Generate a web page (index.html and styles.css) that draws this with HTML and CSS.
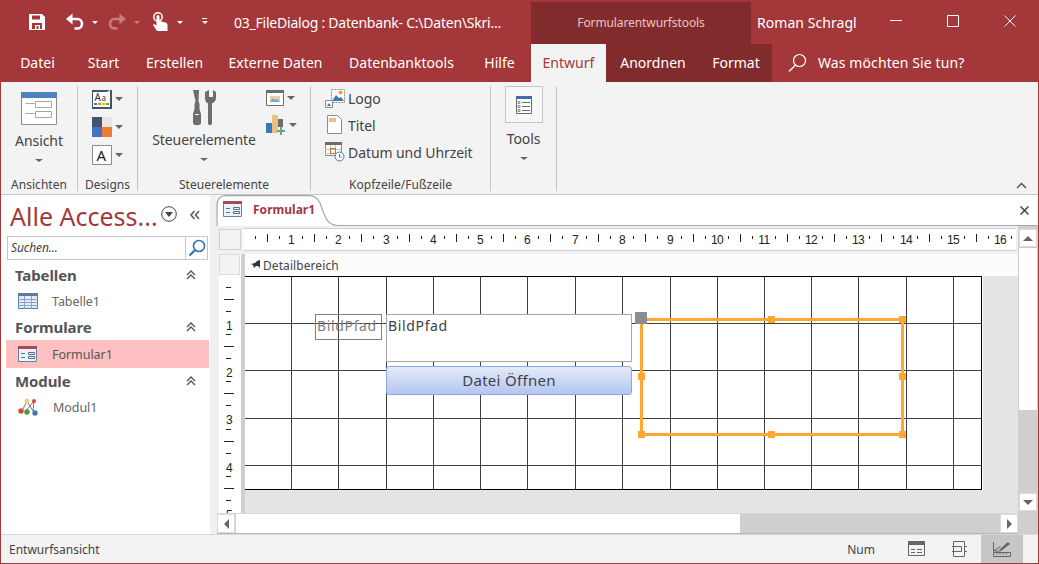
FILE: index.html
```html
<!DOCTYPE html>
<html lang="de">
<head>
<meta charset="utf-8">
<title>03_FileDialog</title>
<link rel="stylesheet" href="styles.css">
</head>
<body>
<div class="window">

  <header class="titlebar">
    <svg class="qat qat-save" width="18" height="18" viewBox="0 0 18 18"><path fill="#fff" d="M1 1h13l3 3v13H1z"/><path fill="#a4373a" d="M4 2.500h8v4H4zM4 10h10v6h-2v-4H7v4H4z"/><path fill="#a4373a" d="M8.500 13h2v3h-2z"/></svg>
    <svg class="qat qat-undo" width="20" height="18" viewBox="0 0 20 18"><path fill="none" stroke="#fff" stroke-width="2.600" d="M2.500 6h10c6 0 6 9.500 0 9.500h-3"/><path fill="#fff" d="M7.500.5v11L1 6z"/></svg>
    <span class="caret caret-light caret-a"></span>
    <svg class="qat qat-redo" width="20" height="18" viewBox="0 0 20 18"><path fill="none" stroke="#c77e80" stroke-width="2.600" d="M17.500 6h-10c-6 0-6 9.500 0 9.500h3"/><path fill="#c77e80" d="M12.500.5v11L19 6z"/></svg>
    <span class="caret caret-dim caret-b"></span>
    <svg class="qat qat-touch" width="17" height="20" viewBox="0 0 17 20"><circle cx="6" cy="5" r="4.200" fill="none" stroke="#fff" stroke-width="1.500"/><path fill="#fff" d="M4.500 4.500a1.500 1.500 0 0 1 3 0V9l6 1.500c1.500.5 2 1.200 2 2.500v6H5L1 13l1-1 2.500 1.500z"/></svg>
    <span class="caret caret-light caret-c"></span>
    <span class="customize"></span>
    <div class="doc-title">03_FileDialog : Datenbank- C:\Daten\Skri...</div>
    <div class="context-title">Formularentwurfstools</div>
    <div class="user-name">Roman Schragl</div>
    <div class="win-controls">
      <svg width="12" height="12" viewBox="0 0 12 12"><path stroke="#fff" d="M0 5.500h12"/></svg>
      <svg width="12" height="12" viewBox="0 0 12 12"><path fill="none" stroke="#fff" d="M.5.500h11v11H.5z"/></svg>
      <svg width="12" height="12" viewBox="0 0 12 12"><path stroke="#fff" d="M.5.500l11 11M11.500.5l-11 11"/></svg>
    </div>
  </header>

  <nav class="tabs">
    <a class="tab tab-datei">Datei</a>
    <a class="tab tab-start">Start</a>
    <a class="tab tab-erst">Erstellen</a>
    <a class="tab tab-ext">Externe Daten</a>
    <a class="tab tab-dbt">Datenbanktools</a>
    <a class="tab tab-hilfe">Hilfe</a>
    <div class="context-tabs">
      <a class="tab tab-active">Entwurf</a>
      <a class="tab tab-anord">Anordnen</a>
      <a class="tab tab-format">Format</a>
    </div>
    <svg class="search-icon" width="19" height="19" viewBox="0 0 19 19"><circle cx="11.500" cy="7.500" r="6" fill="none" stroke="#fff" stroke-width="1.200"/><path stroke="#fff" stroke-width="1.200" d="M7.500 12L1 18.500"/></svg>
    <span class="tell-me">Was möchten Sie tun?</span>
  </nav>

  <section class="ribbon">
    <div class="group group-ansicht">
      <div class="group-body col-center">
        <svg class="big-icon icon-ansicht" width="36" height="33" viewBox="0 0 36 33"><path fill="#fff" stroke="#8c8c8c" d="M.5.500h35v32H.5z"/><path fill="#4f81bd" d="M0 0h36v6H0z"/><path fill="none" stroke="#a6a6a6" d="M4.500 11.500h9M4.500 21.500h9M14.500 9.500h16v6h-16zM14.500 19.500h16v6h-16z"/></svg>
        <span class="big-label">Ansicht</span>
        <span class="caret caret-big"></span>
      </div>
      <div class="group-label">Ansichten</div>
    </div>

    <div class="group group-designs">
      <div class="group-body design-list">
        <div class="design-row">
          <svg width="20" height="20" viewBox="0 0 20 20"><path fill="#44546a" d="M0 1h20v19H0z"/><path fill="#fff" d="M1 3h14l3-2v17H1z"/><text x="2.500" y="12" class="svg-a">A</text><text x="9.500" y="12" class="svg-a svg-a-small">a</text><path fill="#4472c4" d="M2 14h3v2H2z"/><path fill="#ed7d31" d="M6 14h3v2H6z"/><path fill="#ffc000" d="M10 14h3v2h-3z"/><path fill="#70ad47" d="M14 14h3v2h-3z"/></svg>
          <span class="caret"></span>
        </div>
        <div class="design-row">
          <svg width="20" height="20" viewBox="0 0 20 20"><path fill="#44546a" d="M0 0h10v10H0z"/><path fill="#e7e6e6" d="M10 0h10v10H10z"/><path fill="#4472c4" d="M0 10h10v10H0z"/><path fill="#ed7d31" d="M10 10h10v10H10z"/></svg>
          <span class="caret"></span>
        </div>
        <div class="design-row">
          <svg width="20" height="20" viewBox="0 0 20 20"><path fill="#fff" stroke="#8c8c8c" d="M.5.500h19v19H.5z"/><text x="4.500" y="15.500" class="svg-a svg-a-large">A</text></svg>
          <span class="caret"></span>
        </div>
      </div>
      <div class="group-label">Designs</div>
    </div>

    <div class="group group-controls">
      <div class="group-body controls-body">
        <div class="col-center controls-main">
          <svg class="icon-tools" width="24" height="36" viewBox="0 0 24 36"><path fill="#6d6d6d" d="M1 0h6l-.5 11 1 3v5L9 24v9c0 3-8 3-8 0v-9l1.500-5v-5l1-3z"/><path fill="#6d6d6d" d="M13 2v6c0 3 1.500 5 3 5.500V33c0 3 4 3 4 0V13.500c2.500-1 4-3 4-5.500V2l-3-2v7h-4V0z"/><path fill="#f3f3f3" d="M3 24h4v1H3z"/></svg>
          <span class="big-label">Steuerelemente</span>
          <span class="caret caret-big"></span>
        </div>
        <div class="controls-side">
          <div class="design-row">
            <svg width="18" height="16" viewBox="0 0 18 16"><path fill="#fff" stroke="#6d6d6d" d="M.5.500h17v15H.5z"/><path fill="#6d6d6d" d="M0 0h18v3H0z"/><path fill="#e7cfa0" d="M4 6h10v6H4z"/><path fill="#7da7d9" d="M4 12l3-4 2 2 2-1 3 3z"/></svg>
            <span class="caret"></span>
          </div>
          <div class="design-row design-row-chart">
            <svg width="20" height="20" viewBox="0 0 20 20"><path fill="#3f78b5" d="M0 8h6v10H0z"/><path fill="#e8c27f" d="M6 0h6v18H6z"/><path fill="#6d6d6d" d="M12 4h5v8h-5z"/><path fill="#62a88f" d="M14 12h2v3h3v2h-3v3h-2v-3h-3v-2h3z"/></svg>
            <span class="caret"></span>
          </div>
        </div>
      </div>
      <div class="group-label">Steuerelemente</div>
    </div>

    <div class="group group-header">
      <div class="group-body header-list">
        <div class="header-row">
          <svg width="20" height="20" viewBox="0 0 20 20"><path fill="#fff" stroke="#8c8c8c" stroke-dasharray="2 1" d="M6.500 1.500h13v13H6.500z"/><path fill="#3f78b5" d="M7 13l4-6 3 3 2-1 3 4z"/><circle cx="15.500" cy="4.500" r="2" fill="#e8a33d"/><path fill="#fff" stroke="#8c8c8c" d="M.5 12.500h7v7h-7z"/><path fill="#3f78b5" d="M2 18l2-3 2 3z"/></svg>
          <span>Logo</span>
        </div>
        <div class="header-row">
          <svg width="20" height="20" viewBox="0 0 20 20"><path fill="#fff" stroke="#8c8c8c" d="M2.500.5h10l4 4v14h-14z"/><path fill="#e8c27f" d="M4 3h7v4H4z"/></svg>
          <span>Titel</span>
        </div>
        <div class="header-row">
          <svg width="20" height="20" viewBox="0 0 20 20"><path fill="#fff" stroke="#8c8c8c" d="M.5.500h16v13H.5z"/><path fill="#6d6d6d" d="M0 0h17v3H0z"/><path fill="none" stroke="#c6c6c6" d="M0 7.500h16M0 11.500h16M5.500 3v10M10.500 3v10"/><path fill="none" stroke="#d0681f" d="M5.500 6.500h5v5h-5z"/><circle cx="14.500" cy="14.500" r="4.500" fill="#fff" stroke="#3f78b5"/><path fill="none" stroke="#3f78b5" d="M14.500 12v3h2"/></svg>
          <span>Datum und Uhrzeit</span>
        </div>
      </div>
      <div class="group-label">Kopfzeile/Fußzeile</div>
    </div>

    <div class="group group-tools">
      <div class="group-body col-center">
        <div class="tools-box">
          <svg width="16" height="18" viewBox="0 0 16 18"><path fill="#fff" stroke="#6d6d6d" d="M.5.500h15v17H.5z"/><path fill="#3f6fa8" d="M0 0h16v3H0z"/><path fill="none" stroke="#6d6d6d" d="M6 6.500h8M6 10.500h8M6 14.500h8"/><path fill="none" stroke="#8c8c8c" d="M2 5.500h2v2H2zM2 9.500h2v2H2zM2 13.500h2v2H2z"/></svg>
        </div>
        <span class="big-label tools-label">Tools</span>
        <span class="caret caret-big"></span>
      </div>
    </div>

    <svg class="ribbon-collapse" width="11" height="7" viewBox="0 0 11 7"><path fill="none" stroke="#555" stroke-width="1.500" d="M1 6l4.500-4.500L10 6"/></svg>
  </section>

  <main class="workspace">
    <aside class="navpane">
      <div class="nav-head">
        <span class="nav-title">Alle Access...</span>
        <svg class="nav-menu" width="16" height="16" viewBox="0 0 16 16"><circle cx="8" cy="8" r="7.300" fill="none" stroke="#444"/><path fill="#444" d="M4 6h8l-4 5z"/></svg>
        <svg class="nav-shut" width="10" height="10" viewBox="0 0 10 10"><path fill="none" stroke="#555" stroke-width="1.500" d="M4.500 1L1 5l3.500 4M9 1L5.500 5 9 9"/></svg>
      </div>
      <div class="nav-search">
        <span class="nav-search-text">Suchen...</span>
        <span class="nav-search-btn">
          <svg width="18" height="18" viewBox="0 0 18 18"><circle cx="11" cy="7" r="5.500" fill="none" stroke="#2f74b5" stroke-width="1.600"/><path stroke="#2f74b5" stroke-width="2.200" d="M7 11l-5.500 5.500"/></svg>
        </span>
      </div>

      <div class="nav-group">
        <span>Tabellen</span>
        <svg width="10" height="10" viewBox="0 0 10 10"><path fill="none" stroke="#555" stroke-width="1.300" d="M1 5l4-4 4 4M1 9l4-4 4 4"/></svg>
      </div>
      <div class="nav-item">
        <svg width="20" height="16" viewBox="0 0 20 16"><path fill="#e3ebf5" stroke="#5a7aa8" d="M.5.500h19v15H.5z"/><path fill="#5a7aa8" d="M0 0h20v3H0z"/><path fill="none" stroke="#8aa4c8" d="M0 6.500h20M0 9.500h20M0 12.500h20M6.500 3v13M13.500 3v13"/></svg>
        <span>Tabelle1</span>
      </div>

      <div class="nav-group">
        <span>Formulare</span>
        <svg width="10" height="10" viewBox="0 0 10 10"><path fill="none" stroke="#555" stroke-width="1.300" d="M1 5l4-4 4 4M1 9l4-4 4 4"/></svg>
      </div>
      <div class="nav-item nav-item-selected">
        <svg width="20" height="16" viewBox="0 0 20 16"><path fill="#edf2f9" stroke="#6c7fa0" d="M.5.500h18v15H.5z"/><path fill="#a44a5c" d="M0 0h19v3H0z"/><path fill="none" stroke="#5a6f90" d="M3 7.500h4M3 11.500h4M10.500 6.500h6v2h-6zM10.500 10.500h6v2h-6z"/></svg>
        <span>Formular1</span>
      </div>

      <div class="nav-group">
        <span>Module</span>
        <svg width="10" height="10" viewBox="0 0 10 10"><path fill="none" stroke="#555" stroke-width="1.300" d="M1 5l4-4 4 4M1 9l4-4 4 4"/></svg>
      </div>
      <div class="nav-item nav-item-module">
        <svg width="21" height="18" viewBox="0 0 21 18"><path fill="none" stroke="#777" d="M9 3l-5 10M9 3l6 10M16 3L7 14M16 3l-1 10"/><circle cx="9" cy="3" r="2.500" fill="#e8d27a"/><circle cx="16" cy="3" r="2" fill="#d9482b"/><circle cx="3" cy="13" r="2.700" fill="#d9482b"/><circle cx="9" cy="14" r="2.700" fill="#4c9a3f"/><circle cx="17" cy="15" r="2.700" fill="#3f78b5"/></svg>
        <span>Modul1</span>
      </div>
    </aside>

    <section class="document">
      <div class="doc-tabs">
        <div class="doc-tab">
          <svg class="doc-tab-edge" width="122" height="31" viewBox="0 0 122 31"><path fill="none" stroke="#a6a6a6" stroke-width="1.200" d="M1 31V10Q1 .6 10 .6H93Q101 .6 104 8C109 22 111 30.500 122 30.500"/></svg>
          <svg width="20" height="16" viewBox="0 0 20 16"><path fill="#edf2f9" stroke="#6c7fa0" d="M.5.500h18v15H.5z"/><path fill="#a44a5c" d="M0 0h19v3H0z"/><path fill="none" stroke="#5a6f90" d="M3 7.500h4M3 11.500h4M10.500 6.500h6v2h-6zM10.500 10.500h6v2h-6z"/></svg>
          <span>Formular1</span>
        </div>
        <svg class="doc-close" width="9" height="9" viewBox="0 0 9 9"><path stroke="#444" stroke-width="1.500" d="M.5.500l8 8M8.500.5l-8 8"/></svg>
      </div>

      <div class="designer">
        <div class="designer-main">
          <div class="ruler-row">
            <div class="ruler-corner"></div>
            <svg class="ruler-h" width="773" height="21" viewBox="243 229 773 21">
              <defs>
                <path id="tick-h" d="M11.500 7v3M23.500 5v8M35.500 7v3"/>
                <path id="tick-v" d="M226 11.500h5M224 23.500h10M226 35.500h5"/>
              </defs>
              <g class="ticks" transform="translate(0 229)">
                <use href="#tick-h" x="244"/><use href="#tick-h" x="291"/><use href="#tick-h" x="338"/><use href="#tick-h" x="386"/><use href="#tick-h" x="433"/><use href="#tick-h" x="480"/><use href="#tick-h" x="527"/><use href="#tick-h" x="575"/><use href="#tick-h" x="622"/><use href="#tick-h" x="670"/><use href="#tick-h" x="717"/><use href="#tick-h" x="764"/><use href="#tick-h" x="811"/><use href="#tick-h" x="858"/><use href="#tick-h" x="906"/><use href="#tick-h" x="953"/><use href="#tick-h" x="1000"/>
              </g>
              <g class="ruler-nums">
                <text x="291" y="244">1</text><text x="338" y="244">2</text><text x="386" y="244">3</text><text x="433" y="244">4</text><text x="480" y="244">5</text><text x="527" y="244">6</text><text x="575" y="244">7</text><text x="622" y="244">8</text><text x="670" y="244">9</text><text x="717" y="244">10</text><text x="764" y="244">11</text><text x="811" y="244">12</text><text x="858" y="244">13</text><text x="906" y="244">14</text><text x="953" y="244">15</text><text x="1000" y="244">16</text>
              </g>
            </svg>
          </div>

          <div class="canvas-row">
            <div class="ruler-v-col">
              <div class="ruler-v-corner"></div>
              <svg class="ruler-v" width="22" height="238" viewBox="219 276 22 238">
                <g class="ticks" transform="translate(0 276)">
                  <use href="#tick-v" y="0"/><use href="#tick-v" y="47"/><use href="#tick-v" y="94"/><use href="#tick-v" y="142"/><use href="#tick-v" y="189"/>
                </g>
                <g class="ruler-nums">
                  <text x="229" y="330">1</text><text x="229" y="377">2</text><text x="229" y="424">3</text><text x="229" y="472">4</text><text x="229" y="519">5</text>
                </g>
              </svg>
            </div>
            <div class="canvas-col">
              <div class="section-bar">
                <svg width="10" height="9" viewBox="0 0 10 9"><path fill="#333" d="M9 0v8L7 6H5L3 8 2 5 0 4l4-1 2-2z"/></svg>
                <span>Detailbereich</span>
              </div>
              <div class="form-area">
                <svg class="form-grid" width="738" height="214" viewBox="245 276 738 214">
                  <path class="grid-lines" d="M291.500 277v212M338.500 277v212M386.500 277v212M433.500 277v212M480.500 277v212M527.500 277v212M575.500 277v212M622.500 277v212M670.500 277v212M717.500 277v212M764.500 277v212M811.500 277v212M858.500 277v212M906.500 277v212M953.500 277v212M245 323.500h736M245 370.500h736M245 418.500h736M245 465.500h736"/>
                  <path class="grid-edge" d="M245 276.500h736.500v213H245"/>
                </svg>
                <div class="ctl ctl-label">BildPfad</div>
                <div class="ctl ctl-text">BildPfad</div>
                <div class="ctl ctl-button">Datei Öffnen</div>
                <div class="ctl ctl-image">
                  <i class="handle h-tc"></i><i class="handle h-tr"></i>
                  <i class="handle h-ml"></i><i class="handle h-mr"></i>
                  <i class="handle h-bl"></i><i class="handle h-bc"></i><i class="handle h-br"></i>
                </div>
                <i class="move-handle"></i>
              </div>
            </div>
          </div>

          <div class="hscroll">
            <span class="sb-btn"><i class="arrow arrow-left"></i></span>
            <span class="hscroll-thumb"></span>
            <span class="sb-btn sb-btn-right"><i class="arrow arrow-right"></i></span>
          </div>
        </div>

        <div class="vscroll">
          <span class="sb-btn-v"><i class="arrow arrow-up"></i></span>
          <span class="vscroll-thumb"></span>
          <span class="sb-btn-v sb-btn-down"><i class="arrow arrow-down"></i></span>
        </div>
      </div>
    </section>
  </main>

  <footer class="statusbar">
    <span class="status-text">Entwurfsansicht</span>
    <span class="status-num">Num</span>
    <span class="status-view">
      <svg width="18" height="16" viewBox="0 0 18 16"><path fill="none" stroke="#666" d="M.5.500h16v14H.5z"/><path fill="#666" d="M0 0h17v4H0z"/><path fill="none" stroke="#666" d="M3 8.500h4M3 11.500h4M9 8.500h5M9 11.500h5"/></svg>
    </span>
    <span class="status-view">
      <svg width="15" height="16" viewBox="0 0 15 16"><path fill="none" stroke="#666" d="M1.500.5h11v15h-11zM0 5.500h9M0 10.500h9M12 5.500h3M12 10.500h3M5.500 5.500h4v5h-4"/></svg>
    </span>
    <span class="status-view status-view-active">
      <svg width="18" height="17" viewBox="0 0 18 17"><path fill="none" stroke="#666" d="M.5 1v9l7-4.500M.5 10h7"/><path fill="#666" d="M6 9l9-8 2 2-9 7z"/><path fill="none" stroke="#666" d="M.5 11.500h17v4H.5zM4 11.500v2M7 11.500v2M10 11.500v2M13 11.500v2"/></svg>
    </span>
  </footer>
</div>
</body>
</html>
```

FILE: styles.css
```css
html, body
{
  margin:0;
  padding:0;
  overflow:hidden;
}

body
{
  font-family:"Noto Sans", "Open Sans", sans-serif;
  color:#444;
}

i
{
  display:block;
}

.window
{
  width:1039px;
  height:564px;
  box-sizing:border-box;
  background-color:#a4373a;
  padding:0 1px 1px 1px;
  display:flex;
  flex-direction:column;
  overflow:hidden;
}

/* title bar */

.titlebar
{
  height:44px;
  flex:none;
  display:flex;
  align-items:center;
  color:#fff;
}

.qat { flex:none; }
.qat-save { margin-left:27px; }
.qat-undo { margin-left:19px; }
.qat-redo { margin-left:9px; }
.qat-touch { margin-left:12px; }

.caret
{
  flex:none;
  display:block;
  width:0;
  height:0;
  border-left:4px solid transparent;
  border-right:4px solid transparent;
  border-top:4px solid #666;
}

.caret-light { border-top-color:#fff; border-left-width:3px; border-right-width:3px; border-top-width:3px; }
.caret-dim { border-top-color:#c77e80; border-left-width:3px; border-right-width:3px; border-top-width:3px; }
.caret-a { margin-left:7px; }
.caret-b { margin-left:7px; }
.caret-c { margin-left:8px; }

.customize
{
  width:5px;
  height:7px;
  margin-left:19px;
  border-top:1px solid #fff;
  position:relative;
}

.customize::after
{
  content:"";
  position:absolute;
  left:0;
  top:2px;
  border-left:3px solid transparent;
  border-right:3px solid transparent;
  border-top:3px solid #fff;
}

.doc-title
{
  width:297px;
  margin-left:27px;
  font-size:14px;
  letter-spacing:-.23px;
  white-space:nowrap;
  color:#fff;
}

.context-title
{
  align-self:flex-end;
  width:220px;
  height:42px;
  line-height:42px;
  text-align:center;
  background-color:#822b2d;
  color:#e9c3c4;
  font-size:12px;
  letter-spacing:-.1px;
}

.user-name
{
  width:115px;
  margin-left:6px;
  font-size:14px;
  letter-spacing:.05px;
  white-space:nowrap;
}

.win-controls
{
  display:flex;
  gap:45px;
  margin:-2px 0 0 18px;
}

/* tabs */

.tabs
{
  position:relative;
  height:38px;
  flex:none;
  display:flex;
  font-size:14px;
  letter-spacing:.02px;
  line-height:37px;
  color:#fff;
}

.tab
{
  display:block;
  text-align:center;
  flex:none;
}

.tab-datei { width:73px; }
.tab-start { width:59px; }
.tab-erst { width:83px; }
.tab-ext { width:119px; }
.tab-dbt { width:133px; }
.tab-hilfe { width:63px; }

.context-tabs
{
  display:flex;
  background-color:#822b2d;
  width:241px;
  flex:none;
}

.tab-active
{
  width:75px;
  background-color:#f3f3f3;
  color:#a4373a;
}

.tab-anord { width:94px; }
.tab-format { width:72px; }

.search-icon
{
  flex:none;
  margin:9px 0 0 16px;
}

.tell-me
{
  margin-left:11px;
  white-space:nowrap;
  letter-spacing:.1px;
}

/* ribbon */

.ribbon
{
  position:relative;
  height:113px;
  flex:none;
  box-sizing:border-box;
  display:flex;
  background-color:#f3f3f3;
  border-bottom:1px solid #c6c6c6;
  padding:4px 0 3px 0;
  font-size:14px;
  letter-spacing:-.08px;
  color:#444;
}

.group
{
  flex:none;
  box-sizing:border-box;
  display:flex;
  flex-direction:column;
  border-right:1px solid #c6c6c6;
  height:105px;
}

.group-ansicht { width:77px; }
.group-designs { width:60px; }
.group-controls { width:173px; }
.group-header { width:180px; }
.group-tools { width:66px; }

.group-body
{
  flex:1;
  min-height:0;
}

.group-label
{
  height:17px;
  line-height:17px;
  margin-top:-4px;
  text-align:center;
  font-size:12px;
  letter-spacing:.02px;
  white-space:nowrap;
  position:relative;
  top:2px;
}

.col-center
{
  display:flex;
  flex-direction:column;
  align-items:center;
}

.big-label
{
  white-space:nowrap;
  line-height:20px;
}

.caret-big
{
  margin-top:8px;
  border-left-width:4px;
  border-right-width:4px;
  border-top-width:3px;
}

.icon-ansicht { margin:6px 0 6px 0; }

.design-list
{
  display:flex;
  flex-direction:column;
  gap:8px;
  padding:3px 0 0 14px;
}

.design-row
{
  display:flex;
  align-items:center;
  gap:3px;
}

.controls-body
{
  display:flex;
}

.controls-main
{
  width:132px;
  margin-right:-4px;
}

.icon-tools { margin:4px 0 4px 0; }

.controls-side
{
  display:flex;
  flex-direction:column;
  gap:9px;
  padding:4px 0 0 0;
}

.header-list
{
  display:flex;
  flex-direction:column;
  gap:7px;
  padding:2px 0 0 14px;
}

.header-row
{
  display:flex;
  align-items:center;
  gap:3px;
  height:20px;
  white-space:nowrap;
}

.tools-box
{
  width:38px;
  height:37px;
  box-sizing:border-box;
  display:flex;
  align-items:center;
  justify-content:center;
  background-color:#f8f8f8;
  border:1px solid #c6c6c6;
}

.tools-label { margin-top:6px; }

.ribbon-collapse
{
  position:absolute;
  right:11px;
  bottom:5px;
}

/* main area */

.workspace
{
  flex:1;
  min-height:0;
  display:flex;
  background-color:#f0f0f0;
}

.navpane
{
  width:209px;
  flex:none;
  background-color:#fff;
  margin-right:6px;
}

.nav-head
{
  height:41px;
  display:flex;
  align-items:center;
}

.nav-title
{
  width:161px;
  margin-left:9px;
  font-size:25px;
  letter-spacing:0;
  color:#a4373a;
  white-space:nowrap;
}

.nav-menu { flex:none; margin-top:-4px; margin-left:-10px; }
.nav-shut { flex:none; margin-left:13px; margin-top:-2px; }

.nav-search
{
  margin-left:6px;
  width:201px;
  height:24px;
  box-sizing:border-box;
  border:1px solid #c6c6c6;
  display:flex;
  justify-content:space-between;
  margin-bottom:2px;
}

.nav-search-text
{
  font-size:12px;
  font-style:italic;
  line-height:22px;
  padding-left:3px;
  letter-spacing:-.1px;
}

.nav-search-btn
{
  width:21px;
  border-left:1px solid #c6c6c6;
  display:flex;
  align-items:center;
  justify-content:center;
}

.nav-group
{
  height:26px;
  box-sizing:border-box;
  display:flex;
  align-items:center;
  justify-content:space-between;
  padding:0 14px 0 14px;
  font-size:15px;
  font-weight:700;
  letter-spacing:-.1px;
  color:#555;
}

.nav-item
{
  height:26px;
  margin-left:5px;
  width:203px;
  display:flex;
  align-items:center;
  font-size:12.500px;
  letter-spacing:-.05px;
  color:#666;
}

.nav-item svg { margin-left:12px; }
.nav-item span { margin-left:14px; }

.nav-item-selected
{
  height:28px;
  background-color:#fec0c0;
  color:#555;
}

/* document */

.document
{
  flex:1;
  min-width:0;
  display:flex;
  flex-direction:column;
  background-color:#fff;
}

.doc-tabs
{
  height:31px;
  flex:none;
  box-sizing:border-box;
  position:relative;
  display:flex;
  border-bottom:1px solid #a6a6a6;
  background-color:#fff;
}

.doc-tab
{
  position:relative;
  width:122px;
  height:31px;
  box-sizing:border-box;
  display:flex;
  align-items:center;
  gap:10px;
  padding:0 0 3px 7px;
  background-color:#fff;
  color:#a4373a;
  font-size:12px;
  font-weight:700;
  letter-spacing:.02px;
}

.doc-tab-edge
{
  position:absolute;
  left:0;
  top:0;
}

.doc-close
{
  position:absolute;
  right:9px;
  top:11px;
}

.designer
{
  flex:1;
  min-height:0;
  display:flex;
  background-color:#f0f0f0;
}

.designer-main
{
  flex:1;
  min-width:0;
  display:flex;
  flex-direction:column;
  padding:3px 0 0 3px;
}

.ruler-row
{
  height:21px;
  flex:none;
  display:flex;
  gap:2px;
}

.ruler-corner
{
  width:20px;
  height:19px;
  border:1px solid #d0d0d0;
  background-color:#f3f3f3;
}

.ruler-h
{
  flex:none;
  background-color:#fff;
  box-shadow:0 -1px 0 #d0d0d0, 0 1px 0 #d0d0d0;
}

.ticks
{
  fill:none;
  stroke:#222;
  stroke-width:1;
  shape-rendering:crispEdges;
}

.ruler-nums
{
  font-family:"Liberation Sans", sans-serif;
  font-size:12px;
  letter-spacing:-.6px;
  fill:#222;
  text-anchor:middle;
}

.svg-a { font-family:"Noto Sans", sans-serif; font-size:10px; fill:#333; }
.svg-a-small { font-size:8px; }
.svg-a-large { font-size:15px; fill:#222; }

.canvas-row
{
  flex:1;
  min-height:0;
  display:flex;
  margin-top:4px;
}

.ruler-v-col
{
  width:22px;
  flex:none;
  background-color:#fff;
  border-right:4px solid #cfcfcf;
  box-sizing:content-box;
  overflow:hidden;
}

.ruler-v-corner
{
  height:21px;
  width:21px;
  background-color:#f3f3f3;
  border:1px solid #dcdcdc;
  box-sizing:border-box;
  margin-bottom:1px;
}

.ruler-v { display:block; }

.canvas-col
{
  flex:1;
  min-width:0;
  display:flex;
  flex-direction:column;
  background-color:#e4e4e4;
}

.section-bar
{
  height:22px;
  flex:none;
  display:flex;
  align-items:center;
  gap:2px;
  padding:1px 0 0 6px;
  box-sizing:border-box;
  background-color:#fcfcfc;
  font-size:12px;
  letter-spacing:.08px;
  color:#444;
}

.section-bar svg { margin-top:-3px; }

.form-area
{
  position:relative;
  flex:1;
  min-height:0;
}

.form-grid
{
  display:block;
  background-color:#fff;
}

.grid-lines
{
  stroke:#404040;
  stroke-width:1;
  shape-rendering:crispEdges;
}

.grid-edge
{
  fill:none;
  stroke:#000;
  stroke-width:1;
  shape-rendering:crispEdges;
}

/* form controls, placed on the design surface */

.ctl
{
  position:absolute;
  box-sizing:border-box;
}

.ctl-label
{
  left:70px;
  top:38px;
  width:67px;
  height:26px;
  border:1px solid #7f7f7f;
  font-size:14px;
  letter-spacing:.65px;
  line-height:22px;
  padding-left:1px;
  color:#7f7f7f;
  white-space:nowrap;
}

.ctl-text
{
  left:141px;
  top:38px;
  width:246px;
  height:48px;
  border:1px solid #a6a6a6;
  background-color:#fff;
  font-size:14px;
  letter-spacing:.65px;
  line-height:22px;
  padding-left:1px;
  color:#404050;
}

.ctl-button
{
  left:141px;
  top:90px;
  width:246px;
  height:29px;
  border:1px solid #8ca8e0;
  border-radius:3px;
  background:linear-gradient(#e4ebf9, #b3c6ef);
  text-align:center;
  font-size:15px;
  line-height:27px;
  letter-spacing:.3px;
  color:#404050;
}

.ctl-image
{
  left:395px;
  top:42px;
  width:264px;
  height:118px;
  border:3px solid #ffa733;
}

.handle
{
  position:absolute;
  width:7px;
  height:7px;
  background-color:#ffa733;
}

.h-tc { left:125px; top:-5px; }
.h-tr { right:-5px; top:-5px; }
.h-ml { left:-5px; top:52px; }
.h-mr { right:-5px; top:52px; }
.h-bl { left:-5px; bottom:-5px; }
.h-bc { left:125px; bottom:-5px; }
.h-br { right:-5px; bottom:-5px; }

.move-handle
{
  position:absolute;
  left:390px;
  top:36px;
  width:12px;
  height:12px;
  background-color:#8a8d94;
}

/* scroll bars */

.hscroll
{
  height:19px;
  flex:none;
  display:flex;
  background-color:#cfcfcf;
  border-top:1px solid #d8d8d8;
  border-bottom:1px solid #b8b8b8;
  margin-left:-2px;
}

.sb-btn
{
  width:18px;
  flex:none;
  display:flex;
  align-items:center;
  justify-content:center;
  background-color:#fff;
  border:1px solid #dcdcdc;
  box-sizing:border-box;
}

.sb-btn-right { margin-left:auto; }

.hscroll-thumb
{
  width:504px;
  margin-left:1px;
  background-color:#fff;
}

.vscroll
{
  width:20px;
  flex:none;
  display:flex;
  flex-direction:column;
  background-color:#cfcfcf;
  box-sizing:border-box;
  padding:3px 1px 23px 1px;
}

.sb-btn-v
{
  height:18px;
  flex:none;
  display:flex;
  align-items:center;
  justify-content:center;
  background-color:#fff;
  border:1px solid #dcdcdc;
  box-sizing:border-box;
}

.sb-btn-down { margin-top:auto; }

.vscroll-thumb
{
  height:162px;
  flex:none;
  background-color:#fff;
  margin-top:1px;
}

.arrow
{
  width:0;
  height:0;
}

.arrow-left { border:5px solid transparent; border-left:none; border-right:5px solid #666; }
.arrow-right { border:5px solid transparent; border-right:none; border-left:5px solid #666; }
.arrow-up { border:5px solid transparent; border-top:none; border-bottom:5px solid #666; }
.arrow-down { border:5px solid transparent; border-bottom:none; border-top:5px solid #666; }

/* status bar */

.statusbar
{
  height:28px;
  flex:none;
  display:flex;
  align-items:center;
  background-color:#f3f3f3;
  border-top:1px solid #d8d8d8;
  font-size:12px;
  letter-spacing:0;
}

.status-text { margin-left:8px; color:#444; }
.status-num { margin-left:auto; margin-right:20px; }

.status-view
{
  width:43px;
  height:28px;
  display:flex;
  align-items:center;
  justify-content:center;
}

.status-view-active
{
  width:42px;
  background-color:#c6c6c6;
  margin-right:15px;
}
```
